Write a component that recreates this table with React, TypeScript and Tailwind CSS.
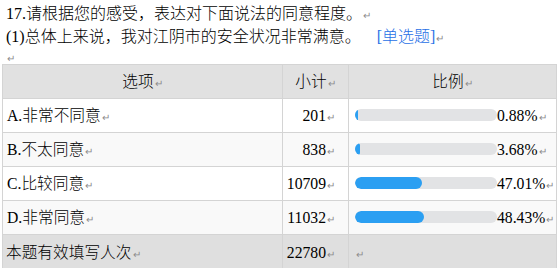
const rows = [
  { label: "A.", text: "非常不同意", count: 201, pct: 0.88, shade: false },
  { label: "B.", text: "不太同意", count: 838, pct: 3.68, shade: true },
  { label: "C.", text: "比较同意", count: 10709, pct: 47.01, shade: false },
  { label: "D.", text: "非常同意", count: 11032, pct: 48.43, shade: true },
];

function Mark() {
  return <span className="ml-px align-baseline text-[10px] text-[#8c8c8c] [font-family:'DejaVu_Sans',sans-serif]">↵</span>;
}

function RowEnd() {
  return <span className="absolute right-[-3px] top-[10px] h-[3px] w-[2px] bg-[#777]" />;
}

export default function App() {
  return (
    <div className="h-[268px] w-[557px] overflow-hidden bg-white text-[15.7px] font-light text-black [font-family:'Liberation_Serif','Noto_Sans_CJK_SC',serif]">
      <div className="pl-[6px] pt-[3px] text-[16px] leading-[21px]">
        <p>17.请根据您的感受，表达对下面说法的同意程度。<Mark /></p>
        <p>
          (1)总体上来说，我对江阴市的安全状况非常满意。
          <span className="ml-[16px] text-[#1f6fe6]">[单选题]</span>
          <Mark />
        </p>
        <p className="h-[15px] leading-[15px]"><Mark /></p>
      </div>

      <table className="ml-[2px] w-[554px] table-fixed border-collapse">
        <colgroup>
          <col className="w-[280px]" />
          <col className="w-[66px]" />
          <col className="w-[208px]" />
        </colgroup>
        <thead>
          <tr className="h-[34px] bg-[#e1e1e1]">
            <th className="border border-[#d4d4d4] font-light">选项<Mark /></th>
            <th className="border border-[#d4d4d4] font-light">小计<Mark /></th>
            <th className="relative border border-[#d4d4d4] font-light">比例<Mark /><RowEnd /></th>
          </tr>
        </thead>
        <tbody>
          {rows.map((r) => (
            <tr key={r.label} className={r.shade ? "h-[34px] bg-[#f9f9f9]" : "h-[34px] bg-white"}>
              <td className="border border-[#d4d4d4] pl-[4px]">
                {r.label}{r.text}<Mark />
              </td>
              <td className="border border-[#d4d4d4] pr-[13px] text-right">
                {r.count}<Mark />
              </td>
              <td className="relative border border-[#d4d4d4] pl-[6px]">
                <div className="flex items-center">
                  <div className="h-[12px] w-[142px] overflow-hidden rounded-full bg-[#e2e3e5]">
                    <div
                      className="h-full rounded-full bg-[#2b9ff2]"
                      style={{ width: `${Math.max(r.pct, 2.2)}%` }}
                    />
                  </div>
                  <span>{r.pct.toFixed(2)}%<Mark /></span>
                </div>
                <RowEnd />
              </td>
            </tr>
          ))}
          <tr className="h-[36px] bg-[#dfdfdf]">
            <td className="border border-[#d4d4d4] pl-[3px]">本题有效填写人次<Mark /></td>
            <td className="border border-[#d4d4d4] pr-[13px] text-right">22780<Mark /></td>
            <td className="relative border border-[#d4d4d4] pl-[6px]"><Mark /><RowEnd /></td>
          </tr>
        </tbody>
      </table>
    </div>
  );
}
